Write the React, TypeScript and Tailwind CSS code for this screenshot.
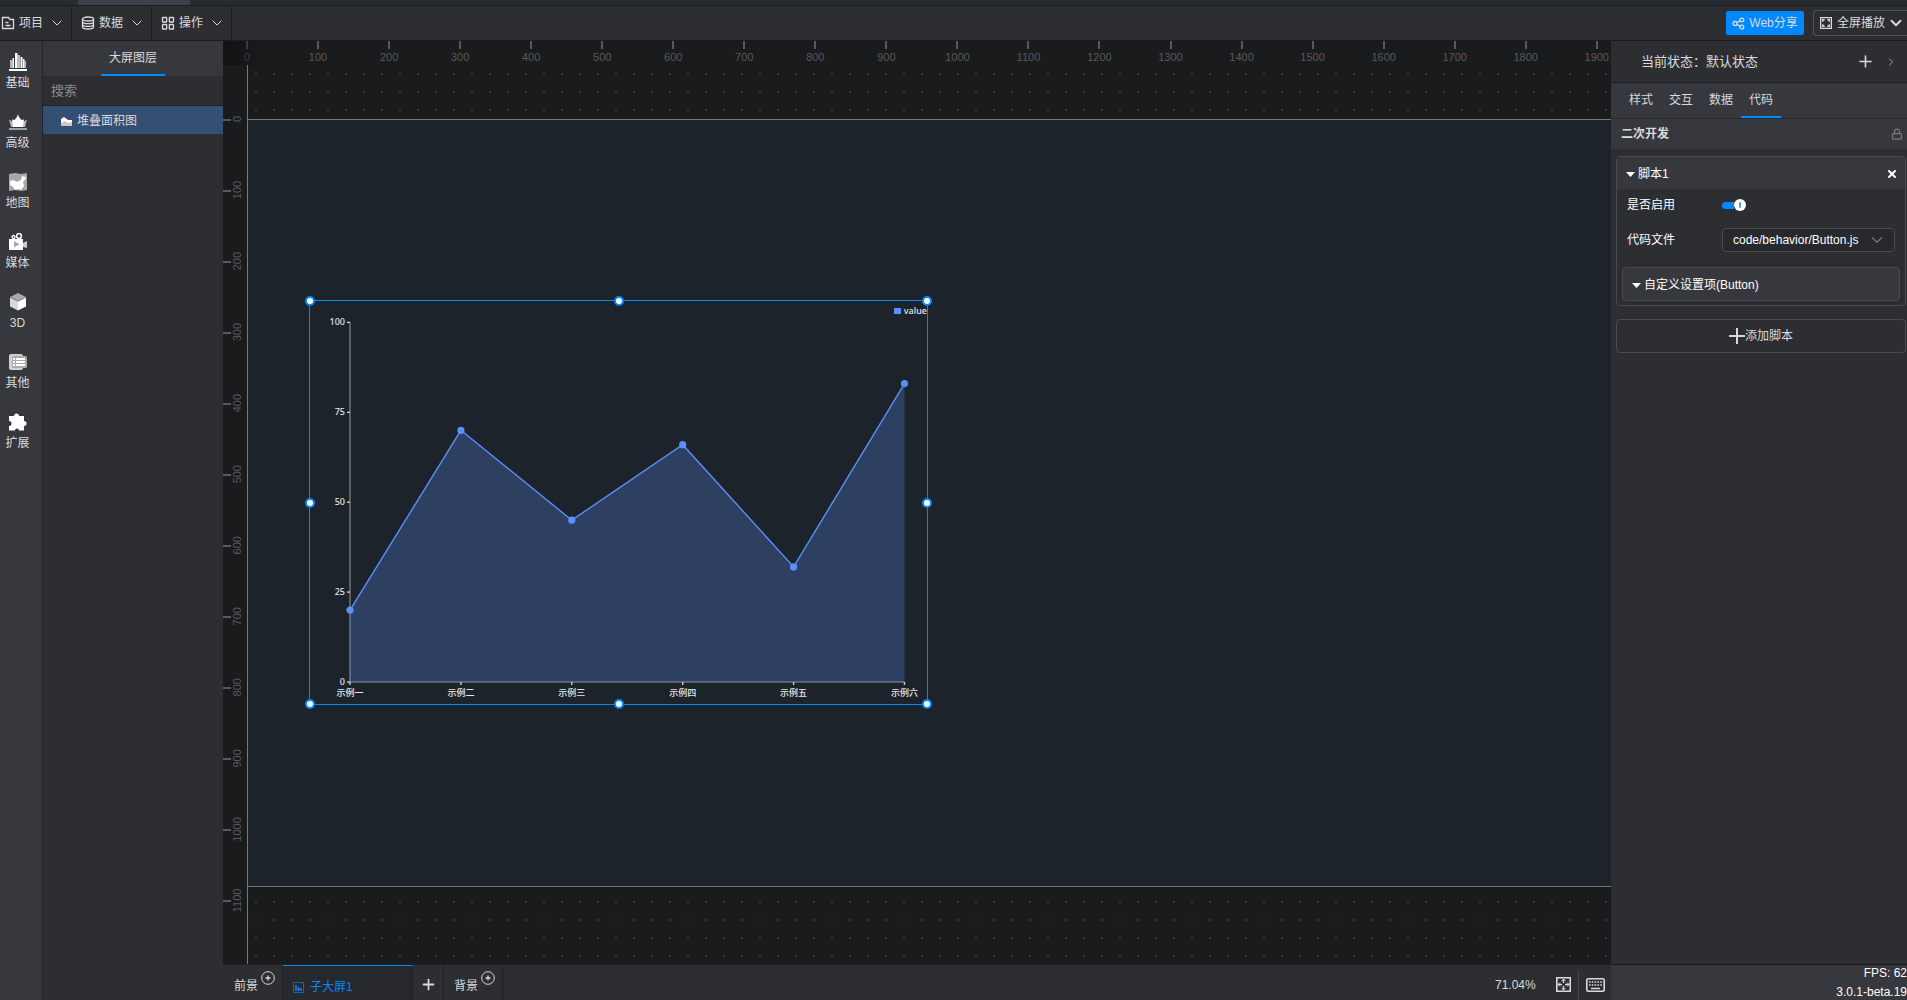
import React, { useState } from 'react';
import { ChevronDown, ChevronRight, Lock, Plus, X } from 'lucide-react';

// Canvas zoom: one design pixel is this many screen pixels
const SCALE = 0.7104;

const MENUS = ['项目', '数据', '操作'];
const TABS = ['样式', '交互', '数据', '代码'];

const POINTS = [
    { label: '示例一', value: 20 },
    { label: '示例二', value: 70 },
    { label: '示例三', value: 45 },
    { label: '示例四', value: 66 },
    { label: '示例五', value: 32 },
    { label: '示例六', value: 83 },
];

const MenuIcon: React.FC<{ name: string }> = ({ name }) => (
    <svg width="14" height="14" viewBox="0 0 14 14" fill="none" stroke="currentColor" strokeWidth="1.3">
        {name === '项目' && (
            <>
                <path d="M1.5 1.5h6l1.5 2h3.5v9h-11z" />
                <path d="M4.5 6.500h3M4.5 9.500h5" />
            </>
        )}
        {name === '数据' && (
            <>
                <ellipse cx="7" cy="3" rx="5.5" ry="2" />
                <path d="M1.5 3v8c0 1.100 2.500 2 5.500 2s5.500-.9 5.500-2V3" />
                <path d="M1.5 5.700c0 1.100 2.500 2 5.500 2s5.500-.9 5.500-2M1.5 8.400c0 1.100 2.500 2 5.500 2s5.500-.9 5.500-2" />
            </>
        )}
        {name === '操作' && (
            <>
                <rect x="1.5" y="1.5" width="4.2" height="4.5" rx=".6" />
                <rect x="8.300" y="1.5" width="4.2" height="4.5" rx=".6" />
                <rect x="1.5" y="8.500" width="4.2" height="4.5" rx=".6" />
                <rect x="8.300" y="8.500" width="4.2" height="4.5" rx=".6" />
            </>
        )}
    </svg>
);

const NAV = [
    {
        label: '基础',
        icon: (
            <>
                <path d="M0 16h18v2H0z" fill="#fff" />
                <path d="M1 7h2.500v8H1zM8.500 2H11v13H8.500zM15.500 8H17v7h-1.500z" fill="#bbb" />
                <path d="M3.500 5H5v10H3.500zM6 0h2.500v15H6zM11.500 4h2v11h-2zM14 6h1.500v9H14z" fill="#fff" />
            </>
        ),
    },
    {
        label: '高级',
        icon: (
            <>
                <path d="M0 6.500l4 2.500 1.500 5H2z" fill="#b5b5b5" />
                <path d="M18 6.500L14 9l-1.500 5H16z" fill="#b5b5b5" />
                <path d="M9 1.500c1 2.500 2 4 3.500 5.500L15 6.500 14 14H4L3 6.500 5.500 7C7 5.500 8 4 9 1.500z" fill="#fff" />
                <path d="M0 15h18v2H0z" fill="#a0a0a0" />
            </>
        ),
    },
    {
        label: '地图',
        icon: (
            <>
                <path d="M0 1l6-1 6 1 6-1v17l-6 1-6-1-6 1z" fill="#a8a8a8" />
                <path d="M1 8l3-1 4 2 4-2 1-4 4 1-1 3-2 2 1 4-3 4-2-1-4 1-2-3-3-2z" fill="#fff" />
            </>
        ),
    },
    {
        label: '媒体',
        icon: (
            <>
                <circle cx="10" cy="3" r="2.4" fill="none" stroke="#fff" strokeWidth="1.5" />
                <circle cx="4.500" cy="4" r="1.500" fill="none" stroke="#fff" strokeWidth="1.3" />
                <path d="M0 6h14v11H0z" fill="#fff" />
                <path d="M14 10l4-2v7l-4-1z" fill="#ccc" />
                <path d="M5 8l5.500 3.300L5 14.500z" fill="#aaa" />
            </>
        ),
    },
    {
        label: '3D',
        icon: (
            <>
                <path d="M9 0l8 4-8 4-8-4z" fill="#aaa" />
                <path d="M1 4.500l8 4V17.500L1 13.500z" fill="#d8d8d8" />
                <path d="M17 4.500l-8 4V17.500l8-4z" fill="#fff" />
            </>
        ),
    },
    {
        label: '其他',
        icon: (
            <>
                <rect x="0" y="1" width="14" height="16" rx="2" fill="#d0d0d0" />
                <rect x="3" y="3" width="15" height="12" rx="1.5" fill="#aaa" />
                <path d="M4 5h2v2H4zM7 5h9v2H7zM4 8h2v2H4zM7 8h9v2H7zM4 11h2v2H4zM7 11h9v2H7z" fill="#fff" />
            </>
        ),
    },
    {
        label: '扩展',
        icon: (
            <path
                d="M1 3h4a2.500 2.500 0 1 1 5 0h5v5a2.500 2.500 0 1 1 0 5v4.500h-5a2 2 0 1 0-4 0H0V13a2.500 2.500 0 0 0 0-5V3z"
                fill="#fff"
            />
        ),
    },
];

const TopBar: React.FC = () => (
    <header className="flex h-[35px] shrink-0 items-center border-b border-[#1a1b1e] bg-[#2d2e32]">
        <nav className="-ml-2 flex h-full">
            {MENUS.map((name) => (
                <button key={name} className="flex h-full w-20 items-center border-r border-[#1f2023] pl-[9px]">
                    <MenuIcon name={name} />
                    <span className="ml-1">{name}</span>
                    <ChevronDown className="ml-1.5" size={16} strokeWidth={1.5} />
                </button>
            ))}
        </nav>
        <div className="ml-auto flex items-center gap-[9px]">
            <button className="flex h-6 w-[78px] items-center justify-center gap-1 rounded-xs bg-[#0088ff]">
                <svg width="13" height="13" viewBox="0 0 13 13" fill="none" stroke="currentColor" strokeWidth="1.4">
                    <circle cx="3" cy="6.500" r="2" />
                    <circle cx="9.800" cy="3" r="1.900" />
                    <circle cx="9.800" cy="10" r="1.900" />
                    <path d="M5 5.500l3-1.600M5 7.500l3 1.600" />
                </svg>
                Web分享
            </button>
            <button className="flex h-[26px] w-[94px] items-center rounded-l-sm border border-r-0 border-[#505156] pl-1.5">
                <svg width="12" height="12" viewBox="0 0 12 12" fill="none" stroke="currentColor">
                    <rect x=".6" y=".6" width="10.8" height="10.8" strokeWidth="1.3" />
                    <path d="M2.700 4.700v-2h2M7.300 2.700h2v2M9.300 7.300v2h-2M4.700 9.300h-2v-2" strokeWidth="1.4" />
                </svg>
                <span className="ml-[5px]">全屏播放</span>
                <ChevronDown className="ml-0.5" size={18} strokeWidth={2.5} />
            </button>
        </div>
    </header>
);

const SideNav: React.FC = () => (
    <nav className="w-[43px] shrink-0 border-r border-[#222326] bg-[#37383d] pt-3">
        {NAV.map((item) => (
            <button key={item.label} className="flex h-[60px] w-[35px] flex-col items-center">
                <svg className="shrink-0" width="18" height="18" viewBox="0 0 18 18">
                    {item.icon}
                </svg>
                <span className="mt-1 leading-4">{item.label}</span>
            </button>
        ))}
    </nav>
);

const LayerPanel: React.FC = () => (
    <aside className="w-[180px] shrink-0 bg-[#2d2e32]">
        <div className="flex h-[35px] justify-center bg-[#37383d]">
            <button className="h-full w-16 border-b-2 border-[#0088ff]">大屏图层</button>
        </div>
        <input
            aria-label="搜索"
            placeholder="搜索"
            className="block h-[30px] w-full border-b border-[#1f2023] px-2 text-[13px] outline-none placeholder:text-[#8b8c90]"
        />
        <button className="flex h-7 w-full items-center gap-1 bg-[#344e74] pt-0.5 pl-[17px]">
            <svg width="13" height="12" viewBox="0 0 13 12">
                <path d="M1 11V4l3-2 4 3h4v6z" fill="#fff" />
                <path d="M1 11V8l4-2 3 2 4-1v4z" fill="#ccc8c0" />
            </svg>
            堆叠面积图
        </button>
    </aside>
);

const RULER_X = Array.from({ length: 20 }, (_, i) => i * 100);
const RULER_Y = Array.from({ length: 12 }, (_, i) => i * 100);

const TopRuler: React.FC = () => (
    <svg className="block h-6 w-full shrink-0" fontSize="11" fill="#59595b" textAnchor="middle">
        {RULER_X.map((v) => (
            <g key={v}>
                <rect x={Math.round(23 + v * SCALE)} y="0" width="2" height="8" />
                <text x={24 + v * SCALE} y="20">{v}</text>
            </g>
        ))}
        {/* Shade over the corner where both rulers meet */}
        <defs>
            <linearGradient id="corner" x1="0" y1="0" x2="1" y2="0">
                <stop offset="0" stopColor="#101011" stopOpacity=".8" />
                <stop offset="1" stopColor="#101011" stopOpacity="0" />
            </linearGradient>
        </defs>
        <rect width="48" height="24" fill="url(#corner)" />
    </svg>
);

const LeftRuler: React.FC = () => (
    <svg className="block h-full w-6 shrink-0" fontSize="11" fill="#59595b" textAnchor="middle">
        {RULER_Y.map((v) => {
            const y = 54 + v * SCALE;
            return (
                <g key={v}>
                    <rect x="0" y={Math.round(y)} width="8" height="2" />
                    <text transform={`translate(18 ${y}) rotate(-90)`}>{v}</text>
                </g>
            );
        })}
    </svg>
);

const AreaChart: React.FC = () => {
    const x = (i: number) => 40 + i * 110.9;
    const y = (v: number) => 381 - v * 3.596;
    const line = POINTS.map((p, i) => `${x(i)},${y(p.value)}`).join(' ');

    return (
        <svg
            className="block h-full w-full overflow-visible font-['Noto_Sans','Noto_Sans_CJK_SC',sans-serif] font-medium"
            fontSize="9"
            fill="#e6e6e6"
        >
            <path d={`M40 21V381H${x(5)}`} fill="none" stroke="#6b6f74" strokeWidth="1.6" />
            <polygon points={`${x(0)},${y(0)} ${line} ${x(5)},${y(0)}`} fill="#5b8ff9" fillOpacity=".27" />
            <polyline points={line} fill="none" stroke="#5b8ff9" strokeWidth="1.4" />
            {[0, 25, 50, 75, 100].map((v) => (
                <g key={v}>
                    <path d={`M37 ${y(v)}h3`} stroke="#ccc" strokeWidth="1.4" />
                    <text x="35" y={y(v) + 3} textAnchor="end">{v}</text>
                </g>
            ))}
            {POINTS.map((p, i) => (
                <g key={p.label}>
                    <path d={`M${x(i)} 381v3`} stroke="#ccc" strokeWidth="1.4" />
                    <circle cx={x(i)} cy={y(p.value)} r="3.6" fill="#5b8ff9" />
                    <text x={x(i)} y="395" textAnchor="middle">{p.label}</text>
                </g>
            ))}
            <rect x="584" y="7" width="7" height="6" fill="#5b8ff9" />
            <text x="617" y="13" textAnchor="end">value</text>
        </svg>
    );
};

const HANDLES = [
    [0, 0], [50, 0], [100, 0],
    [0, 50], [100, 50],
    [0, 100], [50, 100], [100, 100],
];

const Canvas: React.FC = () => (
    <div className="flex min-h-0 flex-1 flex-col overflow-hidden bg-[#1a1b1c]">
        <TopRuler />
        <div className="flex min-h-0 flex-1">
            <LeftRuler />
            <div className="min-w-0 flex-1 overflow-hidden border-l border-[#77787a] bg-[radial-gradient(circle,#38393a_1px,transparent_1px)] bg-[length:18px_18px] bg-[position:-1px_0] pt-[54px]">
                <div className="relative h-[768px] border-y border-[#77787a] bg-[#1c232a]">
                    {/* Selected component */}
                    <div className="absolute top-[180px] left-[61px] h-[405px] w-[619px] border border-[#0088ff]">
                        <AreaChart />
                        {HANDLES.map(([left, top]) => (
                            <span
                                key={`${left}-${top}`}
                                className="absolute size-2.5 -translate-1/2 rounded-full border-2 border-[#0088ff] bg-white"
                                style={{ left: `${left}%`, top: `${top}%` }}
                            />
                        ))}
                    </div>
                </div>
            </div>
        </div>
    </div>
);

const CirclePlus: React.FC = () => (
    <svg className="mb-4 ml-[3px] shrink-0" width="14" height="14" viewBox="0 0 14 14" fill="none" stroke="currentColor">
        <circle cx="7" cy="7" r="6.3" />
        <path d="M7 4.500v5M4.500 7h5" strokeWidth="1.3" />
    </svg>
);

const ScreenBar: React.FC = () => (
    <footer className="flex h-9 shrink-0 items-stretch border-t border-[#202124] bg-[#2d2e32]">
        <button className="flex w-[60px] items-center border-r border-[#202124] pt-1.5 pl-[11px]">
            前景
            <CirclePlus />
        </button>
        <button className="flex w-[130px] items-center gap-1.5 border-t border-r border-t-[#0088ff] border-r-[#202124] bg-[#28292d] pt-2 pl-2.5 text-[#0088ff]">
            <svg width="11" height="11" viewBox="0 0 11 11" fill="none" stroke="currentColor">
                <path d="M.5.5h10v10H.5z" strokeOpacity=".65" />
                <path d="M3 3v6M5.500 5v4M8 6v3" strokeWidth="1.5" />
            </svg>
            子大屏1
        </button>
        <button aria-label="新增" className="flex w-[31px] items-center justify-center border-r border-[#202124] pt-1">
            <Plus size={17} strokeWidth={2.5} />
        </button>
        <button className="flex w-[59px] items-center border-r border-[#202124] pt-1.5 pl-2.5">
            背景
            <CirclePlus />
        </button>
        <div className="ml-auto flex items-center pt-1">
            <span className="w-[61px]">71.04%</span>
            <button aria-label="适应画布">
                <svg width="15" height="15" viewBox="0 0 15 15" fill="none" stroke="currentColor">
                    <path d="M.8.8h13.400v13.400H.8z" strokeWidth="1.6" />
                    <path d="M7.500 2v4M7.500 9v4M2 7.500h4M9 7.500h4" strokeWidth="1.4" />
                    <path d="M5.500 4l2-2 2 2M5.500 11l2 2 2-2M4 5.500l-2 2 2 2M11 5.500l2 2-2 2" />
                </svg>
            </button>
            <span className="mx-[7px] h-[30px] w-px bg-[#45464b]" />
            <button aria-label="快捷键" className="mr-1.5">
                <svg width="19" height="14" viewBox="0 0 19 14" fill="none" stroke="currentColor">
                    <rect x=".8" y=".8" width="17.4" height="12.4" rx="1.5" strokeWidth="1.6" />
                    <path d="M3 4h13M3 7h13" strokeWidth="1.6" strokeDasharray="1.6 1.2" />
                    <path d="M5 10.500h9" strokeWidth="1.5" />
                </svg>
            </button>
        </div>
    </footer>
);

const Caret: React.FC = () => (
    <svg width="9" height="5" viewBox="0 0 9 5" fill="currentColor">
        <path d="M0 0h9L4.500 5z" />
    </svg>
);

const ScriptCard: React.FC = () => {
    const [enabled, setEnabled] = useState(true);

    return (
        <section className="rounded-sm border border-[#4a4b50] text-white">
            <div className="flex h-8 items-center justify-between bg-[#37383d] pt-0.5 pr-[7px] pl-[9px]">
                <button className="flex items-center gap-[3px]">
                    <Caret />
                    脚本1
                </button>
                <button aria-label="删除">
                    <X size={12} strokeWidth={4} />
                </button>
            </div>
            <div className="flex h-8 items-center pl-2.5">
                <label htmlFor="enabled" className="w-[95px]">是否启用</label>
                <label className="flex items-center">
                    <input
                        id="enabled"
                        type="checkbox"
                        className="sr-only"
                        checked={enabled}
                        onChange={(e) => setEnabled(e.target.checked)}
                    />
                    <span className="h-[7px] w-3 rounded-l-full bg-[#0088ff]" />
                    <span className="flex size-3 items-center justify-center rounded-full bg-white">
                        <span className="h-1.5 w-0.5 rounded-full bg-[#5b8ff9]" />
                    </span>
                </label>
            </div>
            <div className="flex h-[38px] items-center pr-2.5 pl-2.5">
                <label htmlFor="file" className="w-[95px] shrink-0">代码文件</label>
                <div className="flex h-6 flex-1 items-center rounded-sm border border-[#4a4b50] bg-[#28292d] pr-2">
                    <select id="file" className="h-full min-w-0 flex-1 appearance-none pl-2.5 outline-none">
                        <option>code/behavior/Button.js</option>
                    </select>
                    <ChevronDown className="shrink-0 text-[#77787c]" size={18} strokeWidth={1.5} />
                </div>
            </div>
            <div className="px-[5px] pt-2 pb-1">
                <button className="flex h-[34px] w-full items-center gap-[3px] rounded-sm border border-[#4a4b50] bg-[#37383d] pt-0.5 pl-[9px]">
                    <Caret />
                    自定义设置项(Button)
                </button>
            </div>
        </section>
    );
};

const Inspector: React.FC = () => (
    <aside className="flex w-[296px] shrink-0 flex-col bg-[#2d2e32]">
        <div className="flex h-[42px] items-center border-b border-[#1f2023] pr-2.5 pl-[30px] text-[13px]">
            当前状态：默认状态
            <button aria-label="添加状态" className="ml-auto">
                <Plus size={19} strokeWidth={2} />
            </button>
            <button aria-label="展开" className="ml-2.5 text-[#a0a1a5]">
                <ChevronRight size={12} />
            </button>
        </div>
        <div className="flex h-9 border-b border-[#2b2c30] bg-[#37383d] pl-2.5">
            {TABS.map((tab) => (
                <button
                    key={tab}
                    className={tab === '代码' ? 'w-10 border-b-2 border-[#0088ff]' : 'w-10 border-b-2 border-transparent'}
                >
                    {tab}
                </button>
            ))}
        </div>
        <div className="flex h-[30px] items-center justify-between bg-[#37383d] pr-1 pl-2.5 font-bold">
            二次开发
            <Lock className="text-[#77787c]" size={12} strokeWidth={2.5} />
        </div>
        <div className="flex flex-1 flex-col gap-[13px] pt-[7px] pr-px pl-[5px]">
            <ScriptCard />
            <button className="flex h-[34px] items-center justify-center rounded-sm border border-[#4a4b50]">
                <svg width="16" height="16" viewBox="0 0 16 16" stroke="currentColor" strokeWidth="2">
                    <path d="M8 0v16M0 8h16" />
                </svg>
                添加脚本
            </button>
        </div>
        <div className="flex h-9 flex-col gap-1 border-t border-[#1a1b1e] bg-[#37383d] text-right whitespace-nowrap text-white">
            <p className="leading-4">FPS: 62</p>
            <p className="leading-[14px]">3.0.1-beta.19</p>
        </div>
    </aside>
);

export default function App() {
    return (
        <div className="flex h-screen flex-col overflow-hidden bg-[#2d2e32] font-['Liberation_Sans','Noto_Sans_CJK_SC',sans-serif] text-xs text-[#d9dadc]">
            <div className="h-1.5 shrink-0 border-b border-[#1c1d21] bg-[#272b34] pl-[78px]">
                <div className="h-full w-28 bg-[#3c414c]" />
            </div>
            <TopBar />
            <div className="flex min-h-0 flex-1">
                <SideNav />
                <LayerPanel />
                <main className="flex min-w-0 flex-1 flex-col">
                    <Canvas />
                    <ScreenBar />
                </main>
                <Inspector />
            </div>
        </div>
    );
}
